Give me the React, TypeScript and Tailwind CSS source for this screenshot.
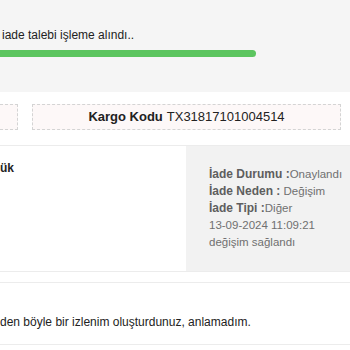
export default function App() {
  return (
    <div className="w-[350px] h-[350px] overflow-hidden bg-white font-['Liberation_Sans',Arial,sans-serif] text-[#222]">
      {/* Status */}
      <div className="h-[92px] bg-[#f5f5f5] pt-[27px]">
        <p className="pl-[2px] text-[12px] leading-[16px]">iade talebi işleme alındı..</p>
        <div className="mt-[7px] -ml-[20px] h-[7px] w-[276px] rounded-full bg-[#5cc55f]" />
      </div>

      {/* Kargo */}
      <div className="pt-[12px]">
        <div className="flex -ml-[100px] gap-[14px]">
          <div className="h-[26px] w-[118px] border border-dashed border-[#d4d4d4] bg-[#fdf8f8]" />
          <div className="flex h-[26px] w-[309px] items-center justify-center border border-dashed border-[#d4d4d4] bg-[#fdf8f8] text-[13px]">
            <span className="font-bold">Kargo Kodu</span>
            <span className="ml-[4px]">TX31817101004514</span>
          </div>
        </div>
      </div>

      {/* Detail */}
      <div className="mt-[15px] flex border-y border-[#ececec]">
        <div className="w-[186px] pt-[14px] text-[12px] leading-[16px] font-bold">ük</div>
        <div className="h-[125px] flex-1 bg-[#f2f2f2] pl-[23px] pt-[20px] text-[11.5px] leading-[17px] text-[#707070]">
          <p>
            <span className="text-[12px] font-bold text-[#5e5e5e]">İade Durumu :</span>Onaylandı
          </p>
          <p>
            <span className="text-[12px] font-bold text-[#5e5e5e]">İade Neden :</span> Değişim
          </p>
          <p>
            <span className="text-[12px] font-bold text-[#5e5e5e]">İade Tipi :</span>Diğer
          </p>
          <p>13-09-2024 11:09:21</p>
          <p>değişim sağlandı</p>
        </div>
      </div>

      {/* Comment */}
      <div className="mt-[10px] border-y border-[#ececec] pt-[31px] pb-[14px]">
        <p className="text-[12px] leading-[16px]">den böyle bir izlenim oluşturdunuz, anlamadım.</p>
      </div>
    </div>
  );
}
